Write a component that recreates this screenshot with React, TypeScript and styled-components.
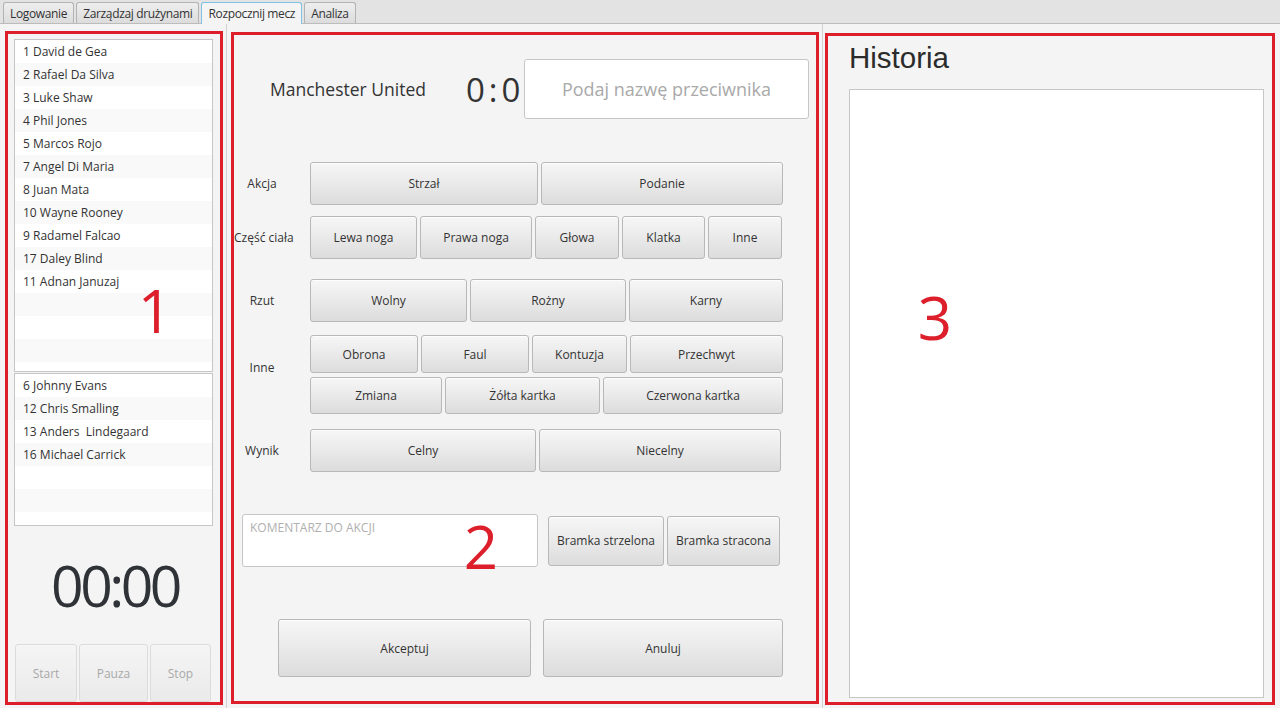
import React from 'react';
import styled, { createGlobalStyle, css } from 'styled-components';

const RED = '#dc1f2b';

const GlobalStyle = createGlobalStyle`
  html, body {
    margin: 0;
    padding: 0;
    background: #f4f4f4;
  }

  body {
    font-family: "Open Sans", "Noto Sans", sans-serif;
    font-size: 12px;
    color: #333;
  }

  * {
    box-sizing: border-box;
  }
`;

const Window = styled.div`
  display: flex;
  flex-direction: column;
  width: 1280px;
  height: 708px;
  overflow: hidden;
  background: #f4f4f4;
`;

const TabBar = styled.div`
  display: flex;
  align-items: flex-end;
  gap: 2px;
  height: 24px;
  padding-left: 3px;
  background: #e3e3e3;
  border-bottom: 1px solid #bcbcbc;
`;

const Tab = styled.div<{ $active?: boolean }>`
  display: flex;
  align-items: center;
  height: 21px;
  padding: 0 6px;
  border: 1px solid #b3b3b3;
  border-bottom: none;
  border-radius: 3px 3px 0 0;
  background: linear-gradient(#eeeeee, #dcdcdc);
  color: #333;
  letter-spacing: -0.35px;
  white-space: nowrap;

  ${ ({ $active }) => $active && css`
    height: 22px;
    margin-bottom: -1px;
    background: #f4f4f4;
    border-color: #7fc2e4;
  ` }
`;

const Content = styled.div`
  flex: 1;
  display: flex;
  min-height: 0;
`;

const Divider = styled.div`
  width: 1px;
  background: #d2d2d2;
`;

const LeftPane = styled.div`
  display: flex;
  width: 226px;
  padding: 7px 3px 3px 5px;
`;

const CenterPane = styled.div`
  display: flex;
  width: 595px;
  padding: 8px 3px 4px 4px;
`;

const RightPane = styled.div`
  display: flex;
  flex: 1;
  padding: 9px 5px 3px 2px;
`;

const Marked = styled.div`
  position: relative;
  flex: 1;
  display: flex;
  flex-direction: column;
  border: 3px solid ${ RED };
`;

const Callout = styled.span<{ $top: number; $left: number }>`
  position: absolute;
  top: ${ ({ $top }) => $top }px;
  left: ${ ({ $left }) => $left }px;
  width: 40px;
  font-size: 60px;
  line-height: 1;
  text-align: center;
  color: ${ RED };
  pointer-events: none;
`;

/* ---------- left: players + timer ---------- */

const Squad = styled.div`
  display: flex;
  flex-direction: column;
  flex: 1;
  padding: 5px 7px 0 6px;
`;

const PlayerList = styled.div<{ $height: number }>`
  height: ${ ({ $height }) => $height }px;
  margin-bottom: 1px;
  overflow: hidden;
  background: #fff;
  border: 1px solid #c6c6c6;
`;

const PlayerRow = styled.div`
  height: 23px;
  padding-left: 8px;
  line-height: 23px;
  white-space: pre;
  color: #333;
  background: #fff;

  &:nth-child(even) {
    background: #f9f9f9;
  }
`;

const Timer = styled.div`
  flex: 1;
  display: flex;
  align-items: center;
  justify-content: center;
  padding-left: 3px;
  font-size: 57px;
  line-height: 1;
  letter-spacing: -3.5px;
  color: #2f3237;
`;

const ControlBar = styled.div`
  display: flex;
  gap: 2px;
  padding: 0 2px 0 1px;
`;

const FxButton = styled.button<{ $w?: number; $h: number }>`
  flex: ${ ({ $w }) => $w ? `0 0 ${ $w }px` : '1' };
  height: ${ ({ $h }) => $h }px;
  padding: 0 4px;
  font: inherit;
  font-size: 12px;
  color: #333;
  white-space: nowrap;
  border: 1px solid #b8b8b8;
  border-radius: 3px;
  background: linear-gradient(#f6f6f6 0%, #ebebeb 45%, #dcdcdc 100%);
  box-shadow: inset 0 1px 0 rgba(255, 255, 255, 0.8);
  cursor: default;

  &:disabled {
    opacity: 0.4;
  }
`;

/* ---------- center: match form ---------- */

const MatchForm = styled.div`
  display: flex;
  flex-direction: column;
  flex: 1;
`;

const MatchHeader = styled.div`
  display: flex;
  align-items: center;
  height: 60px;
  margin-top: 24px;
  padding-left: 36px;
`;

const TeamName = styled.div`
  width: 196px;
  font-size: 17.5px;
  color: #333;
`;

const Score = styled.div`
  width: 56px;
  font-size: 33px;
  line-height: 1;
  letter-spacing: 4px;
  text-align: center;
  color: #333;
`;

const OpponentField = styled.input`
  width: 285px;
  height: 60px;
  margin-left: 2px;
  font: inherit;
  font-size: 18px;
  text-align: center;
  color: #333;
  background: #fff;
  border: 1px solid #c6c6c6;
  border-radius: 3px;
  outline: none;

  &::placeholder {
    color: #a9a9a9;
  }
`;

const ActionRow = styled.div<{ $mt: number }>`
  display: grid;
  grid-template-columns: 76px 1fr;
  align-items: center;
  margin-top: ${ ({ $mt }) => $mt }px;
`;

const RowLabel = styled.div<{ $lift?: number }>`
  padding-right: 20px;
  padding-bottom: ${ ({ $lift }) => $lift ?? 0 }px;
  text-align: center;
  white-space: nowrap;
  color: #333;
`;

const ButtonLine = styled.div`
  display: flex;
  align-items: center;
  gap: 3px;
`;

const ButtonStack = styled.div`
  display: flex;
  flex-direction: column;
  gap: 4px;
`;

const CommentRow = styled.div`
  display: flex;
  align-items: center;
  gap: 3px;
  margin-top: 42px;
  padding-left: 8px;
`;

const CommentBox = styled.textarea`
  width: 296px;
  height: 53px;
  margin-right: 7px;
  padding: 4px 7px;
  font: inherit;
  font-size: 12px;
  resize: none;
  background: #fff;
  border: 1px solid #c6c6c6;
  border-radius: 3px;
  outline: none;

  &::placeholder {
    color: #b0b0b0;
  }
`;

const FooterRow = styled.div`
  display: flex;
  gap: 12px;
  margin-top: 52px;
  padding-left: 44px;
`;

/* ---------- right: history ---------- */

const HistoryTitle = styled.h1`
  margin: 7px 0 0;
  padding-left: 21px;
  font-family: "Liberation Sans", Arial, sans-serif;
  font-size: 29.5px;
  font-weight: normal;
  line-height: 29px;
  color: #2b2b2b;
`;

const HistoryBox = styled.div`
  flex: 1;
  margin: 17px 8px 4px 21px;
  background: #fff;
  border: 1px solid #c6c6c6;
`;

const squad = [
  '1 David de Gea',
  '2 Rafael Da Silva',
  '3 Luke Shaw',
  '4 Phil Jones',
  '5 Marcos Rojo',
  '7 Angel Di Maria',
  '8 Juan Mata',
  '10 Wayne Rooney',
  '9 Radamel Falcao',
  '17 Daley Blind',
  '11 Adnan Januzaj',
];

const bench = [
  '6 Johnny Evans',
  '12 Chris Smalling',
  '13 Anders  Lindegaard',
  '16 Michael Carrick',
];

const fill = (names: string[], rows: number) =>
  Array.from({ length: rows }, (_, i) => names[i] ?? '');

type Choice = [string, number];

const bodyParts: Choice[] = [['Lewa noga', 107], ['Prawa noga', 112], ['Głowa', 84], ['Klatka', 83], ['Inne', 74]];
const throws: Choice[] = [['Wolny', 157], ['Rożny', 156], ['Karny', 154]];
const otherTop: Choice[] = [['Obrona', 108], ['Faul', 108], ['Kontuzja', 95], ['Przechwyt', 153]];
const otherBottom: Choice[] = [['Zmiana', 132], ['Żółta kartka', 155], ['Czerwona kartka', 180]];

const Choices = ({ items, h }: { items: Choice[]; h: number }) => (
  <ButtonLine>
    { items.map(([label, w]) => (
      <FxButton key={ label } $w={ w } $h={ h }>{ label }</FxButton>
    )) }
  </ButtonLine>
);

const App = () => (
  <>
    <GlobalStyle />
    <Window>
      <TabBar>
        <Tab>Logowanie</Tab>
        <Tab>Zarządzaj drużynami</Tab>
        <Tab $active>Rozpocznij mecz</Tab>
        <Tab>Analiza</Tab>
      </TabBar>

      <Content>
        <LeftPane>
          <Marked>
            <Squad>
              <PlayerList $height={ 333 }>
                { fill(squad, 15).map((name, i) => <PlayerRow key={ i }>{ name }</PlayerRow>) }
              </PlayerList>
              <PlayerList $height={ 153 }>
                { fill(bench, 7).map((name, i) => <PlayerRow key={ i }>{ name }</PlayerRow>) }
              </PlayerList>
              <Timer>00:00</Timer>
              <ControlBar>
                <FxButton $w={ 62 } $h={ 58 } disabled>Start</FxButton>
                <FxButton $w={ 69 } $h={ 58 } disabled>Pauza</FxButton>
                <FxButton $w={ 61 } $h={ 58 } disabled>Stop</FxButton>
              </ControlBar>
            </Squad>
            <Callout $top={ 246 } $left={ 127 }>1</Callout>
          </Marked>
        </LeftPane>

        <Divider />

        <CenterPane>
          <Marked>
            <MatchForm>
              <MatchHeader>
                <TeamName>Manchester United</TeamName>
                <Score>0:0</Score>
                <OpponentField placeholder="Podaj nazwę przeciwnika" />
              </MatchHeader>

              <ActionRow $mt={ 43 }>
                <RowLabel>Akcja</RowLabel>
                <Choices items={ [['Strzał', 228], ['Podanie', 242]] } h={ 43 } />
              </ActionRow>

              <ActionRow $mt={ 11 }>
                <RowLabel>Część ciała</RowLabel>
                <Choices items={ bodyParts } h={ 43 } />
              </ActionRow>

              <ActionRow $mt={ 20 }>
                <RowLabel>Rzut</RowLabel>
                <Choices items={ throws } h={ 43 } />
              </ActionRow>

              <ActionRow $mt={ 13 }>
                <RowLabel $lift={ 15 }>Inne</RowLabel>
                <ButtonStack>
                  <Choices items={ otherTop } h={ 38 } />
                  <Choices items={ otherBottom } h={ 37 } />
                </ButtonStack>
              </ActionRow>

              <ActionRow $mt={ 15 }>
                <RowLabel>Wynik</RowLabel>
                <Choices items={ [['Celny', 226], ['Niecelny', 242]] } h={ 43 } />
              </ActionRow>

              <CommentRow>
                <CommentBox placeholder="KOMENTARZ DO AKCJI" />
                <FxButton $w={ 116 } $h={ 50 }>Bramka strzelona</FxButton>
                <FxButton $w={ 113 } $h={ 50 }>Bramka stracona</FxButton>
              </CommentRow>

              <FooterRow>
                <FxButton $w={ 253 } $h={ 58 }>Akceptuj</FxButton>
                <FxButton $w={ 240 } $h={ 58 }>Anuluj</FxButton>
              </FooterRow>
            </MatchForm>
            <Callout $top={ 481 } $left={ 227 }>2</Callout>
          </Marked>
        </CenterPane>

        <Divider />

        <RightPane>
          <Marked>
            <HistoryTitle>Historia</HistoryTitle>
            <HistoryBox />
            <Callout $top={ 251 } $left={ 87 }>3</Callout>
          </Marked>
        </RightPane>
      </Content>
    </Window>
  </>
);

export default App;
